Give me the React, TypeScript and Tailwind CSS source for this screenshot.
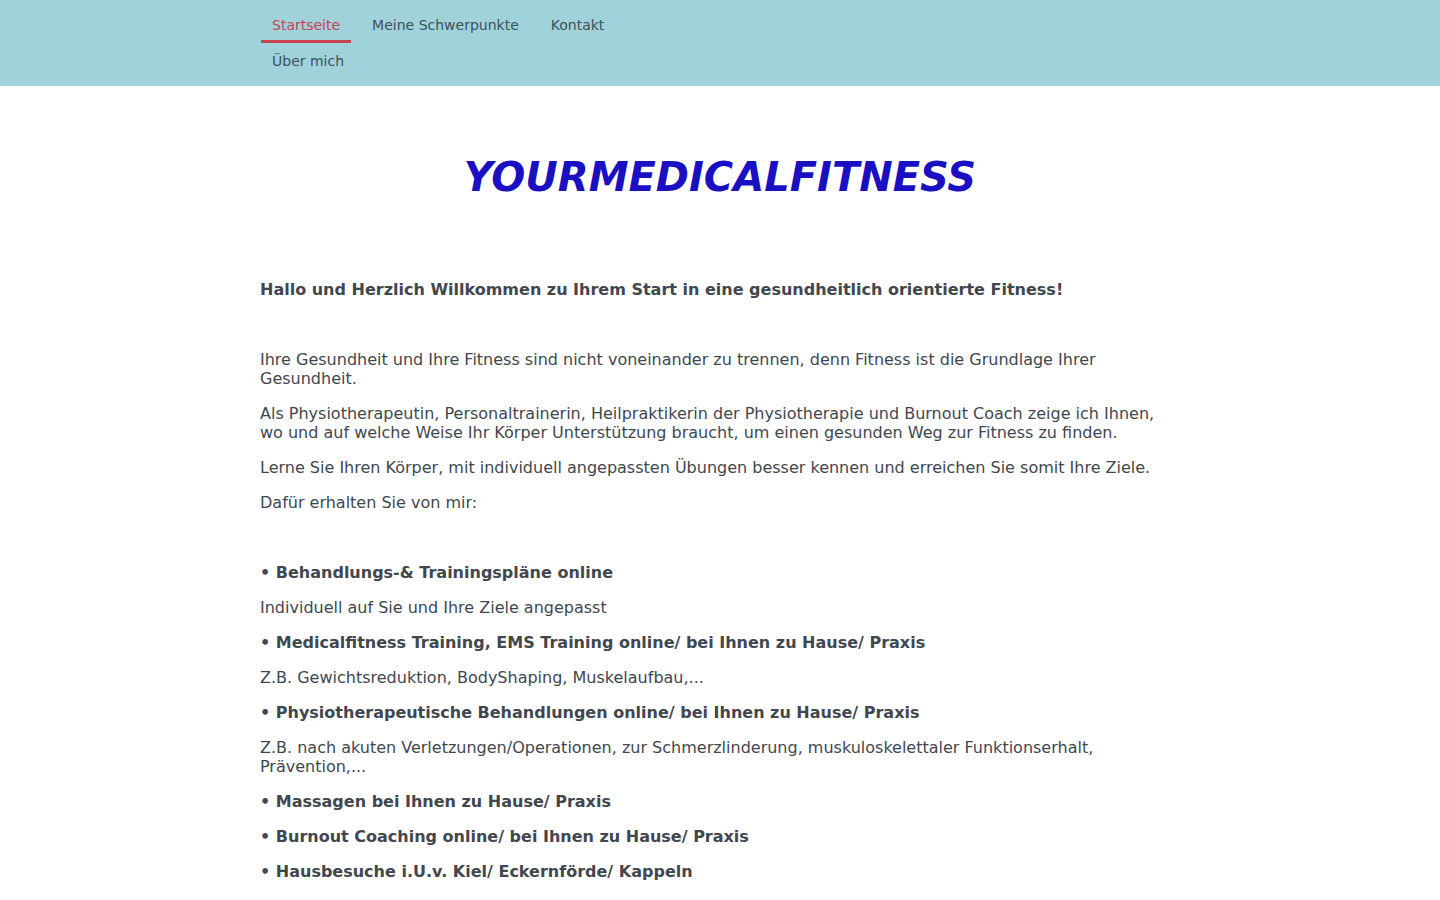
import React from "react";

export default function App() {
  const p = "mb-[16px]";
  return (
    <div className="min-h-screen bg-white text-[16px] leading-[19px] text-[#41474f]" style={{ fontFamily: '"DejaVu Sans", sans-serif' }}>
      <nav className="bg-[#a0d2dc] h-[86px] pt-[7px]">
        <div className="w-[920px] mx-auto text-[14px] text-[#3d5159] pl-[1px]">
          <div className="flex h-[36px]">
            <div className="px-[11px] mr-[10px] h-[36px] flex items-center border-b-[3px] border-[#c9434f] text-[#c9434f] pt-[3px]">Startseite</div>
            <div className="px-[11px] mr-[10px] h-[36px] flex items-center">Meine Schwerpunkte</div>
            <div className="px-[11px] mr-[10px] h-[36px] flex items-center">Kontakt</div>
          </div>
          <div className="flex h-[36px]">
            <div className="px-[11px] h-[36px] flex items-center">Über mich</div>
          </div>
        </div>
      </nav>
      <main className="w-[920px] mx-auto pt-[60px] pb-[40px]">
        <h1 className="text-center text-[40px] leading-[60px] font-bold italic text-[#1a10c2] mb-[73px] pt-[1px]">YOURMEDICALFITNESS</h1>
        <p className={`${p} font-bold`}>Hallo und Herzlich Willkommen zu Ihrem Start in eine gesundheitlich orientierte Fitness!</p>
        <p className={`${p} h-[19px]`}></p>
        <p className={p}>Ihre Gesundheit und Ihre Fitness sind nicht voneinander zu trennen, denn Fitness ist die Grundlage Ihrer Gesundheit.</p>
        <p className={p}>Als Physiotherapeutin, Personaltrainerin, Heilpraktikerin der Physiotherapie und Burnout Coach zeige ich Ihnen, wo und auf welche Weise Ihr Körper Unterstützung braucht, um einen gesunden Weg zur Fitness zu finden.</p>
        <p className={p}>Lerne Sie Ihren Körper, mit individuell angepassten Übungen besser kennen und erreichen Sie somit Ihre Ziele.</p>
        <p className={p}>Dafür erhalten Sie von mir:</p>
        <p className={`${p} h-[19px]`}></p>
        <p className={`${p} font-bold`}>• Behandlungs-&amp; Trainingspläne online</p>
        <p className={p}>Individuell auf Sie und Ihre Ziele angepasst</p>
        <p className={`${p} font-bold`}>• Medicalfitness Training, EMS Training online/ bei Ihnen zu Hause/ Praxis</p>
        <p className={p}>Z.B. Gewichtsreduktion, BodyShaping, Muskelaufbau,...</p>
        <p className={`${p} font-bold`}>• Physiotherapeutische Behandlungen online/ bei Ihnen zu Hause/ Praxis</p>
        <p className={p}>Z.B. nach akuten Verletzungen/Operationen, zur Schmerzlinderung, muskuloskelettaler Funktionserhalt, Prävention,...</p>
        <p className={`${p} font-bold`}>• Massagen bei Ihnen zu Hause/ Praxis</p>
        <p className={`${p} font-bold`}>• Burnout Coaching online/ bei Ihnen zu Hause/ Praxis</p>
        <p className={`${p} font-bold`}>• Hausbesuche i.U.v. Kiel/ Eckernförde/ Kappeln</p>
      </main>
    </div>
  );
}
